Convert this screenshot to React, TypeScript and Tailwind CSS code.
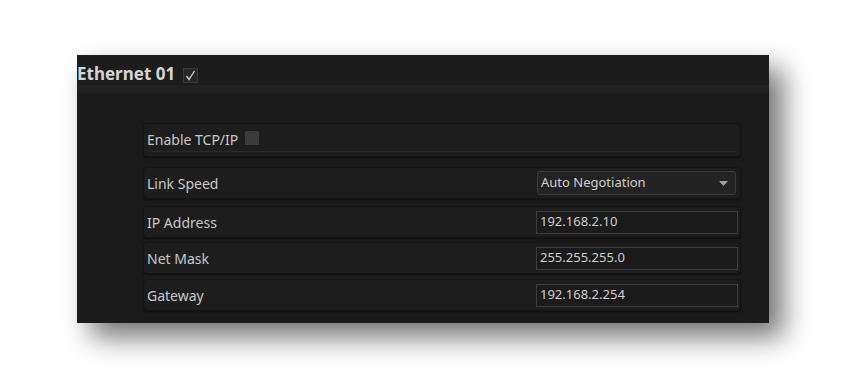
import React from "react";

const font = { fontFamily: '"Segoe UI", "Noto Sans", sans-serif' };

function Row({ label, children, className = "" }: { label: string; children?: React.ReactNode; className?: string }) {
  return (
    <div className={`flex items-center justify-between rounded-[4px] border border-[#151515] bg-[#1d1d1d] pl-[3px] pr-[2px] shadow-[0_1px_2px_rgba(0,0,0,0.5)] ${className}`}>
      <span className="text-[14px] text-[#c9c9c9]">{label}</span>
      {children}
    </div>
  );
}

function Field({ value }: { value: string }) {
  return (
    <div className="flex h-[23px] w-[202px] items-center border border-[#3d3d3d] bg-[#1b1b1b] pl-[3px] text-[13px] text-[#cfcfcf]">
      {value}
    </div>
  );
}

export default function App() {
  return (
    <div className="h-[388px] w-[843px] bg-white pl-[77px] pt-[55px]" style={font}>
      <div className="h-[268px] w-[692px] bg-[#1b1b1b] shadow-[14px_14px_26px_rgba(0,0,0,0.55)]">
        <div className="flex h-[30px] items-end bg-[#1c1c1c] pb-[3px]">
          <span className="text-[17px] font-bold leading-none text-[#d4d4d4]">Ethernet 01</span>
          <span className="ml-[8px] mb-[-1px] flex h-[15px] w-[15px] items-center justify-center border border-[#3a3a3a] bg-[#262626]">
            <svg width="11" height="11" viewBox="0 0 11 11">
              <path d="M1.5 6 L4 9.5 L9.5 1" fill="none" stroke="#d0d0d0" strokeWidth="1.3" />
            </svg>
          </span>
        </div>
        <div className="h-[8px] bg-[#212121] border-b border-[#1f1f1f]" />
        <div className="flex flex-col pl-[66px] pr-[28px] pt-[30px]">
          <Row label="Enable TCP/IP" className="relative h-[34px] items-start justify-start pt-[5px]">
            <span className="ml-[7px] mt-[2px] h-[14px] w-[14px] bg-[#3a3a3a]" />
            <div className="absolute bottom-[4px] left-[4px] right-[4px] h-[1px] bg-[#2a2a2a]" />
          </Row>
          <Row label="Link Speed" className="mt-[10px] h-[32px] pr-[4px]">
            <div className="flex h-[24px] w-[199px] items-center justify-between rounded-[3px] border border-[#3a3a3a] bg-[#232323] pl-[3px] pr-[7px] text-[13px] text-[#cfcfcf]">
              <span>Auto Negotiation</span>
              <svg width="9" height="5" viewBox="0 0 9 5"><path d="M0 0 H9 L4.5 5 Z" fill="#a0a0a0" /></svg>
            </div>
          </Row>
          <Row label="IP Address" className="mt-[7px] h-[32px]">
            <Field value="192.168.2.10" />
          </Row>
          <Row label="Net Mask" className="mt-[4px] h-[32px]">
            <Field value="255.255.255.0" />
          </Row>
          <Row label="Gateway" className="mt-[5px] h-[32px]">
            <Field value="192.168.2.254" />
          </Row>
        </div>
      </div>
    </div>
  );
}
